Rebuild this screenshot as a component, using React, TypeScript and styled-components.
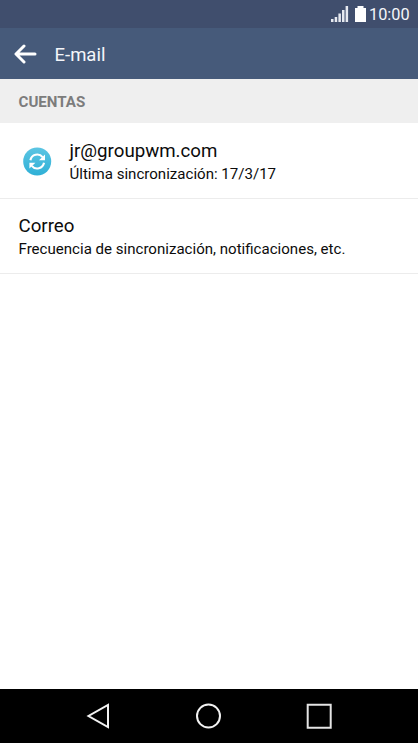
import React from 'react';
import styled, { createGlobalStyle } from 'styled-components';

const GlobalStyle = createGlobalStyle`
  * {
    box-sizing: border-box;
  }

  body {
    margin: 0;
    background: #fff;
    font-family: Roboto, "Liberation Sans", sans-serif;
  }
`;

const Screen = styled.div`
  width: 100%;
  height: 100vh;
  display: flex;
  flex-direction: column;
  overflow: hidden;
`;

const StatusBar = styled.header`
  height: 28px;
  flex-shrink: 0;
  display: flex;
  align-items: flex-start;
  justify-content: flex-end;
  padding: 6px 8px 0 0;
  background: #404e6d;
  color: #f4f6fa;
`;

const StatusIcon = styled.svg`
  flex-shrink: 0;
  margin-left: 6px;
`;

const Clock = styled.span`
  width: 41px;
  margin-left: 3px;
  font-size: 16.3px;
  line-height: 18px;
  white-space: nowrap;
`;

const AppBar = styled.div`
  height: 51px;
  flex-shrink: 0;
  display: flex;
  align-items: center;
  padding: 0 14px;
  gap: 17.5px;
  background: #465a7a;
`;

const BackButton = styled.button`
  display: flex;
  padding: 0;
  border: none;
  background: none;
  cursor: pointer;
`;

const Title = styled.h1`
  margin: 0;
  padding-top: 2px;
  color: #f4f6fa;
  font-size: 18.5px;
  font-weight: 400;
  line-height: 24px;
`;

const SectionHeader = styled.h2`
  height: 44px;
  flex-shrink: 0;
  margin: 0;
  padding: 1px 18.5px 0;
  background: #efefef;
  color: #7c7c7c;
  font-size: 15.1px;
  font-weight: 700;
  line-height: 44px;
`;

const Row = styled.div`
  height: 75px;
  flex-shrink: 0;
  display: flex;
  align-items: center;
  padding: 0 18.5px;
  box-shadow: 0 1px 0 #ececec;
`;

const AccountIcon = styled.svg`
  flex-shrink: 0;
  margin: 1px 18px 0 4px;
`;

const RowBody = styled.div`
  padding-top: 3px;
`;

const RowTitle = styled.div`
  color: #0c0c0c;
  font-size: 18.7px;
  line-height: 24px;
  white-space: nowrap;
`;

const RowText = styled.div`
  color: #0c0c0c;
  font-size: 15.07px;
  line-height: 22px;
  white-space: nowrap;
`;

const NavBar = styled.nav`
  height: 54px;
  flex-shrink: 0;
  margin-top: auto;
  display: flex;
  align-items: center;
  justify-content: center;
  gap: 82px;
  background: #000;
`;

const NavButton = styled.button`
  display: flex;
  padding: 0;
  border: none;
  background: none;
  cursor: pointer;
`;

const SignalIcon = () => (
  <StatusIcon width="18" height="16" viewBox="0 0 18 16" fill="#e6e9f0">
    <path d="M0 13h2.5v3H0zM3.7 11h2.5v5H3.7zM7.4 7.5h2.5V16H7.4zM11 4h2.5v12H11zM14.6 0h2.5v16h-2.5z" />
  </StatusIcon>
);

const BatteryIcon = () => (
  <StatusIcon width="11" height="16" viewBox="0 0 11 16" fill="#fff">
    <path d="M2.5 0h6v2H11v14H0V2h2.5z" />
  </StatusIcon>
);

const BackArrow = () => (
  <svg width="23" height="20" viewBox="0 0 23 20" fill="none" stroke="#fff" strokeWidth="3" strokeLinecap="round" strokeLinejoin="round">
    <path d="M10 2L2 10l8 8M2.5 10H21" />
  </svg>
);

const SyncIcon = () => (
  <AccountIcon width="29" height="29" viewBox="0 0 29 29">
    <defs>
      <linearGradient id="syncFill" x1="0" y1="0" x2="0" y2="1">
        <stop offset="0" stopColor="#5cc5e3" />
        <stop offset="1" stopColor="#2fb0d6" />
      </linearGradient>
    </defs>
    <circle cx="14.2" cy="14.5" r="14" fill="url(#syncFill)" />
    <g fill="none" stroke="#fff" strokeWidth="2.1">
      <path d="M7.4 13.2A6.9 6.9 0 0 1 19.6 10.2" />
      <path d="M21 15.8A6.9 6.9 0 0 1 8.8 18.8" />
    </g>
    <path d="M22 7.4v5.8h-6zM6.4 21.6v-5.8h6z" fill="#fff" />
  </AccountIcon>
);

export default function App() {
  return (
    <Screen>
      <GlobalStyle />
      <StatusBar>
        <SignalIcon />
        <BatteryIcon />
        <Clock>10:00</Clock>
      </StatusBar>

      <AppBar>
        <BackButton aria-label="Atrás">
          <BackArrow />
        </BackButton>
        <Title>E-mail</Title>
      </AppBar>

      <SectionHeader>CUENTAS</SectionHeader>

      <Row>
        <SyncIcon />
        <RowBody>
          <RowTitle>jr@groupwm.com</RowTitle>
          <RowText>Última sincronización: 17/3/17</RowText>
        </RowBody>
      </Row>
      <Row>
        <RowBody>
          <RowTitle>Correo</RowTitle>
          <RowText>Frecuencia de sincronización, notificaciones, etc.</RowText>
        </RowBody>
      </Row>

      <NavBar>
        <NavButton aria-label="Atrás">
          <svg width="28" height="28" viewBox="0 0 28 28" fill="none" stroke="#f2f2f2" strokeWidth="2">
            <path d="M23 3v22L3.5 14z" />
          </svg>
        </NavButton>
        <NavButton aria-label="Inicio">
          <svg width="28" height="28" viewBox="0 0 28 28" fill="none" stroke="#f2f2f2" strokeWidth="2">
            <circle cx="13.5" cy="14" r="11.5" />
          </svg>
        </NavButton>
        <NavButton aria-label="Recientes">
          <svg width="28" height="28" viewBox="0 0 28 28" fill="none" stroke="#e4e4e4" strokeWidth="2">
            <path d="M2.7 2.7h23v23h-23z" />
          </svg>
        </NavButton>
      </NavBar>
    </Screen>
  );
}
